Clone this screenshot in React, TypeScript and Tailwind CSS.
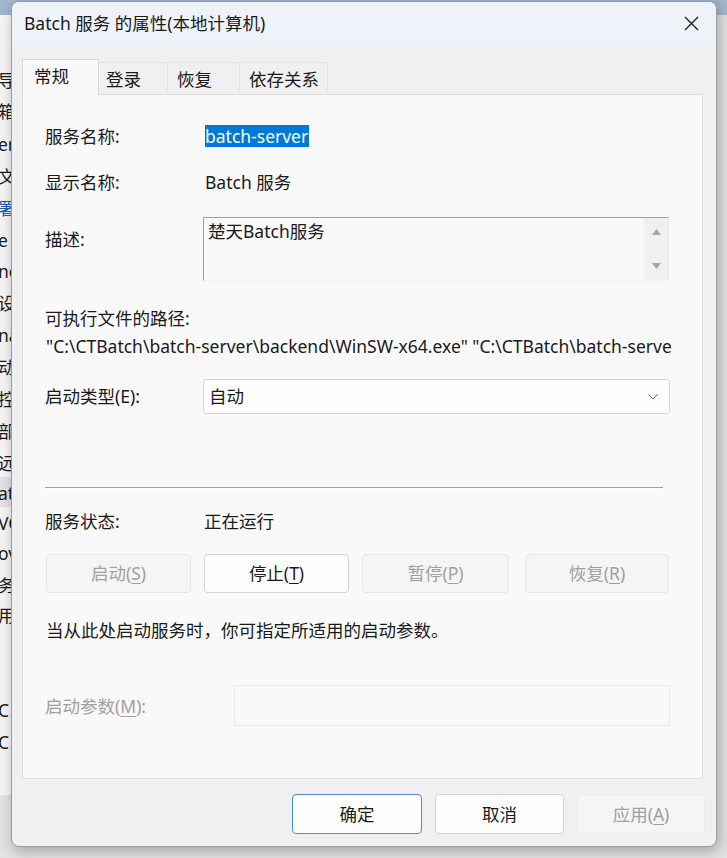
import React from "react";

const bgRows: [string, number, string?][] = [
  ["导", 79],
  ["箱", 31],
  ["er", 33],
  ["文", 32],
  ["署 I", 32, "blue"],
  ["e", 32],
  ["ne", 31],
  ["设", 32],
  ["na", 32],
  ["动", 32],
  ["控", 32],
  ["部", 32],
  ["远", 32],
  ["at", 30, "sel"],
  ["VC", 30],
  ["ov", 30],
  ["务", 32],
  ["用 W", 30],
  ["", 32],
  ["", 32],
  ["C", 31],
  ["C", 32],
];

function DisabledBtn({ label, u, w }: { label: string; u: string; w: string }) {
  return (
    <div
      className={`${w} h-[39px] flex items-center justify-center rounded-[4px] border border-[#e6e6e6] bg-[#f5f5f5] text-[#a0a0a0]`}
    >
      {label}(<span className="underline underline-offset-[3px]">{u}</span>)
    </div>
  );
}

export default function App() {
  return (
    <div className="relative w-[727px] h-[858px] overflow-hidden bg-[#e2e2e2] font-['Noto_Sans','Noto_Sans_CJK_SC',sans-serif] text-[17.5px] text-[#1a1a1a]">
      {/* desktop background */}
      <div className="h-[15px] bg-[#a3b6cd]" />
      <div className="w-[11px] h-[780px] overflow-hidden bg-[#f6f6f6]">
        {bgRows.map(([t, h, kind], i) => (
          <div
            key={i}
            style={{ height: h }}
            className={`flex items-end whitespace-nowrap leading-[24px] pb-[2px] ${
              kind === "sel" ? "bg-[#e4e4e4]" : ""
            } ${kind === "blue" ? "text-[#1f5fb0]" : "text-[#1a1a1a]"}`}
          >
            <span className="-ml-[2px]">{t}</span>
          </div>
        ))}
      </div>

      {/* dialog window */}
      <div className="absolute left-[11px] top-[1px] w-[706px] h-[846px] flex flex-col overflow-hidden rounded-[8px] border border-[#9c9c9c] bg-[#f0f0f0] shadow-[2px_4px_14px_rgba(0,0,0,0.28)]">
        {/* title bar */}
        <div className="h-[43px] flex items-center bg-[#eef3fa] pl-[12px] pr-[17px]">
          <span className="leading-none">Batch 服务 的属性(本地计算机)</span>
          <svg className="ml-auto" width="15" height="15" viewBox="0 0 15 15">
            <path d="M1 1 L14 14 M14 1 L1 14" stroke="#1a1a1a" strokeWidth="1.3" fill="none" />
          </svg>
        </div>

        <div className="flex flex-col pl-[10px]">
          {/* tabs */}
          <div className="mt-[14px] h-[35px] flex items-end">
            <div className="relative z-10 -mb-px h-[36px] w-[77px] border border-b-0 border-[#d9d9d9] bg-[#f9f9f9] pl-[11px] pt-[2px] leading-[28px]">
              常规
            </div>
            <div className="h-[32px] w-[69px] border border-l-0 border-b-0 border-[#e2e2e2] bg-[#f0f0f0] pl-[7px] leading-[32px]">
              登录
            </div>
            <div className="h-[32px] w-[72px] border border-l-0 border-b-0 border-[#e2e2e2] bg-[#f0f0f0] pl-[9px] leading-[32px]">
              恢复
            </div>
            <div className="h-[32px] w-[88px] border border-l-0 border-b-0 border-[#e2e2e2] bg-[#f0f0f0] pl-[9px] leading-[32px]">
              依存关系
            </div>
          </div>

          {/* panel */}
          <div className="w-[681px] h-[685px] border border-[#dedede] bg-[#f9f9f9] flex flex-col">
            {/* service name */}
            <div className="mt-[27px] h-[28px] flex items-center pl-[22px]">
              <div className="w-[158px]">服务名称:</div>
              <span className="ml-[2px] h-[22px] leading-[22px] bg-[#0078d7] text-white pr-[1px]">
                batch-server
              </span>
            </div>
            {/* display name */}
            <div className="mt-[18px] h-[28px] flex items-center pl-[22px]">
              <div className="w-[158px]">显示名称:</div>
              <span className="ml-[2px]">Batch 服务</span>
            </div>
            {/* description */}
            <div className="mt-[21px] flex pl-[22px]">
              <div className="w-[158px] pt-[8px] leading-[28px]">描述:</div>
              <div className="w-[466px] h-[64px] flex border border-t-[#a0a0a0] border-l-[#a0a0a0] border-r-[#ececec] border-b-[#f4f4f4] bg-[#f9f9f9]">
                <div className="flex-1 pl-[4px] leading-[26px]">楚天Batch服务</div>
                <div className="w-[24px] h-full bg-[#f0f0f0] flex flex-col items-center justify-between py-[11px]">
                  <svg width="9" height="6" viewBox="0 0 9 6">
                    <path d="M4.5 0 L9 6 L0 6 Z" fill="#a6a6a6" />
                  </svg>
                  <svg width="9" height="6" viewBox="0 0 9 6">
                    <path d="M0 0 L9 0 L4.5 6 Z" fill="#a6a6a6" />
                  </svg>
                </div>
              </div>
            </div>
            {/* exe path */}
            <div className="mt-[23px] h-[28px] flex items-center pl-[22px]">可执行文件的路径:</div>
            <div className="h-[28px] flex items-center ml-[23px] w-[625px] overflow-hidden whitespace-nowrap">
              "C:\CTBatch\batch-server\backend\WinSW-x64.exe" "C:\CTBatch\batch-server\backend\batch-server.xml"
            </div>
            {/* startup type */}
            <div className="mt-[19px] flex items-center pl-[22px]">
              <div className="w-[158px]">启动类型(E):</div>
              <div className="w-[467px] h-[35px] flex items-center rounded-[3px] border border-[#d6d6d6] bg-[#fdfdfd] pl-[5px] pr-[11px]">
                <span>自动</span>
                <svg className="ml-auto" width="10" height="6" viewBox="0 0 10 6">
                  <path d="M0.5 0.5 L5 5 L9.5 0.5" stroke="#606060" strokeWidth="1" fill="none" />
                </svg>
              </div>
            </div>
            {/* separator */}
            <div className="mt-[73px] ml-[22px] w-[618px] h-[2px] border-t border-t-[#a0a0a0] border-b border-b-[#ffffff]" />
            {/* status */}
            <div className="mt-[18px] h-[28px] flex items-center pl-[22px]">
              <div className="w-[159px]">服务状态:</div>
              <span>正在运行</span>
            </div>
            {/* control buttons */}
            <div className="mt-[19px] flex pl-[23px]">
              <DisabledBtn label="启动" u="S" w="w-[145px]" />
              <div className="ml-[13px] w-[145px] h-[39px] flex items-center justify-center rounded-[4px] border border-[#d4d4d4] bg-[#fdfdfd]">
                停止(<span className="underline underline-offset-[3px]">T</span>)
              </div>
              <div className="ml-[13px]">
                <DisabledBtn label="暂停" u="P" w="w-[147px]" />
              </div>
              <div className="ml-[16px]">
                <DisabledBtn label="恢复" u="R" w="w-[144px]" />
              </div>
            </div>
            {/* hint */}
            <div className="mt-[23px] h-[28px] flex items-center pl-[23px]">
              当从此处启动服务时，你可指定所适用的启动参数。
            </div>
            {/* params */}
            <div className="mt-[41px] flex items-center pl-[22px]">
              <div className="w-[189px] text-[#a0a0a0] pt-[2px]">
                启动参数(<span className="underline underline-offset-[3px]">M</span>):
              </div>
              <div className="w-[436px] h-[41px] border border-[#e9e9e9] bg-[#f9f9f9]" />
            </div>
          </div>
        </div>

        {/* dialog buttons */}
        <div className="mt-[15px] flex justify-end pr-[11px]">
          <div className="w-[130px] h-[40px] flex items-center justify-center rounded-[4px] border border-[#4a8fd6] bg-[#fdfdfd]">
            确定
          </div>
          <div className="ml-[13px] w-[129px] h-[40px] flex items-center justify-center rounded-[4px] border border-[#d6d6d6] bg-[#fdfdfd]">
            取消
          </div>
          <div className="ml-[13px] w-[128px] h-[40px] flex items-center justify-center rounded-[4px] border border-[#ececec] bg-[#f5f5f5] text-[#a0a0a0]">
            应用(<span className="underline underline-offset-[3px]">A</span>)
          </div>
        </div>
      </div>
    </div>
  );
}
